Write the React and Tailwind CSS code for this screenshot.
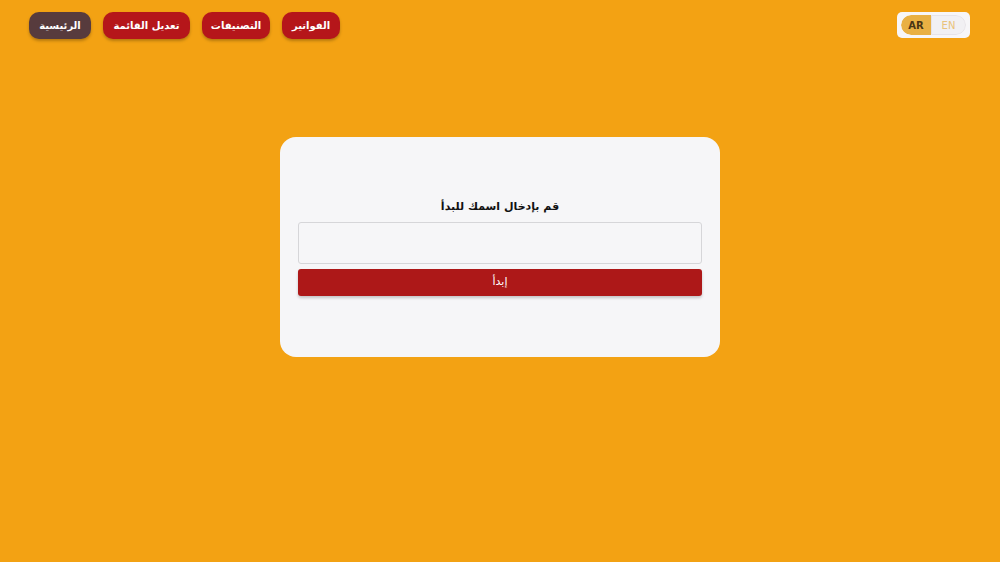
import React from "react";

const font = { fontFamily: '"DejaVu Sans", "Noto Sans", sans-serif' };

export default function App() {
  const navItems = [
    { label: "الفواتير", dark: false, w: "w-[58px]" },
    { label: "التصنيفات", dark: false, w: "w-[68px]" },
    { label: "تعديل القائمة", dark: false, w: "w-[87px]" },
    { label: "الرئيسية", dark: true, w: "w-[62px]" },
  ];
  return (
    <div dir="rtl" style={font} className="w-full h-[562px] bg-[#f3a213] flex flex-col">
      <div className="flex justify-between items-start pt-3 pr-[30px] pl-[29px]">
        <div className="flex items-center bg-[#f7f6f8] rounded-[5px] px-[4px] py-[3px] h-[26px]">
          <div dir="ltr" className="flex h-[20px] rounded-full overflow-hidden">
            <span className="w-[30px] bg-[#e9b043] text-[#4a3415] text-[10px] font-bold flex items-center justify-center rounded-l-full">AR</span>
            <span className="w-[35px] bg-[#f1f0f3] text-[#e9c27a] text-[10px] flex items-center justify-center rounded-r-full border border-[#e6e3e8]">EN</span>
          </div>
        </div>
        <nav className="flex gap-3">
          {navItems.map((it) => (
            <button
              key={it.label}
              className={`${it.w} h-[27px] flex items-center justify-center whitespace-nowrap rounded-[10px] text-white text-[10px] font-bold shadow-[0_2px_3px_rgba(0,0,0,0.25)] ${it.dark ? "bg-[#573b3d]" : "bg-[#b5161a]"}`}
            >
              {it.label}
            </button>
          ))}
        </nav>
      </div>
      <div className="flex justify-center mt-[98px]">
        <div className="w-[440px] h-[220px] bg-[#f6f6f8] rounded-[16px] px-[18px] pt-[61px] flex flex-col items-center">
          <h2 className="text-[11px] font-bold text-[#111] leading-[17px] mb-[7px]">قم بإدخال اسمك للبدأ</h2>
          <input className="w-full h-[42px] border border-[#d6d6d9] rounded-[3px] bg-[#f6f6f8] outline-none" />
          <button className="w-full h-[27px] mt-[5px] bg-[#ad1818] rounded-[3px] text-white text-[11px] shadow-[0_2px_3px_rgba(0,0,0,0.2)]">إبدأ</button>
        </div>
      </div>
    </div>
  );
}
